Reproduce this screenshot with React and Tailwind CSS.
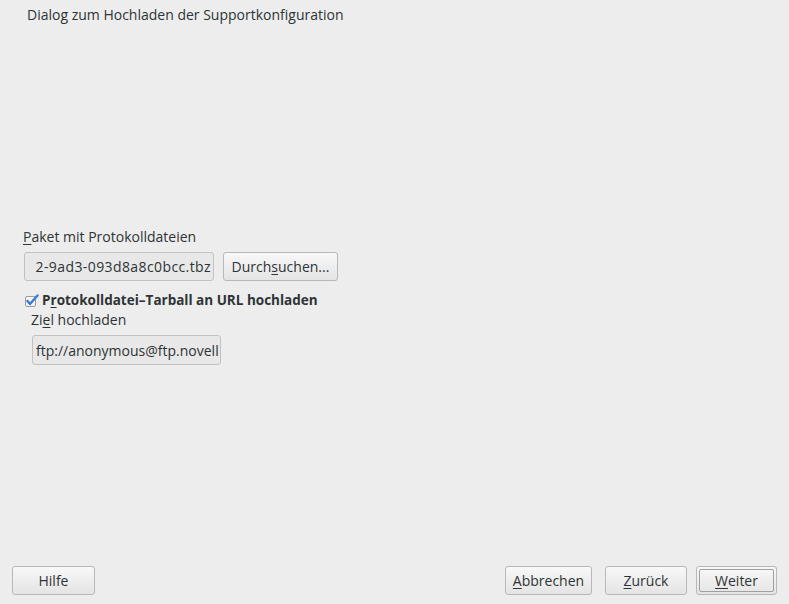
import React from 'react';

const font = { fontFamily: '"Open Sans", "Noto Sans", sans-serif' };

const Btn = ({ children, className = '', primary = false }) => (
  <button
    className={`h-[29px] rounded-[3px] border border-[#b8b8b8] bg-gradient-to-b from-[#f8f8f8] to-[#e4e4e4] text-[14px] text-[#2e3436] ${className}`}
  >
    {primary ? (
      <span className="flex h-full w-full items-center justify-center rounded-[2px] border border-[#a0a0a0]">
        {children}
      </span>
    ) : (
      children
    )}
  </button>
);

const U = ({ children }) => <span className="underline underline-offset-2">{children}</span>;

export default function App() {
  return (
    <div
      className="flex h-[604px] w-[789px] flex-col bg-[#ededed] text-[14px] text-[#2e3436]"
      style={font}
    >
      <div className="pl-[27px] pt-[5px] leading-[19px]">Dialog zum Hochladen der Supportkonfiguration</div>

      <div className="mt-[203px] flex flex-col pl-[23px]">
        <div className="leading-[19px]">
          <U>P</U>aket mit Protokolldateien
        </div>
        <div className="mt-[6px] flex items-center gap-[9px] pl-[1px]">
          <div className="flex h-[29px] w-[190px] items-center justify-end overflow-hidden whitespace-nowrap rounded-[3px] border border-[#c2c2c2] bg-[#e8e8e8] pr-[2px] tracking-[0.4px]">
            2-9ad3-093d8a8c0bcc.tbz
          </div>
          <Btn className="w-[115px]">
            Durch<U>s</U>uchen...
          </Btn>
        </div>
        <div className="mt-[10px] flex items-center gap-[3px] pl-[2px]">
          <svg width="14" height="14" viewBox="0 0 14 14">
            <rect x="0.5" y="2.5" width="10" height="10" rx="1.5" fill="#f4f4f4" stroke="#9a9a9a" />
            <path d="M2.5 7 L5 10 L12.5 1.5" fill="none" stroke="#3a7bd5" strokeWidth="2.4" strokeLinecap="round" strokeLinejoin="round" />
          </svg>
          <span className="font-bold leading-[19px] text-[13.5px]">
            P<U>r</U>otokolldatei–Tarball an URL hochladen
          </span>
        </div>
        <div className="pl-[8px] leading-[19px]">
          Zi<U>e</U>l hochladen
        </div>
        <div className="mt-[6px] pl-[9px]">
          <div className="flex h-[30px] w-[189px] items-center overflow-hidden whitespace-nowrap rounded-[3px] border border-[#c2c2c2] bg-[#e8e8e8] pl-[3px]">
            ftp://anonymous@ftp.novell
          </div>
        </div>
      </div>

      <div className="mt-auto mb-[9px] flex items-center pl-[12px] pr-[12px]">
        <Btn className="w-[83px]">Hilfe</Btn>
        <div className="ml-auto flex">
          <Btn className="w-[87px] mr-[13px]">
            <U>A</U>bbrechen
          </Btn>
          <Btn className="w-[82px] mr-[9px]">
            <U>Z</U>urück
          </Btn>
          <Btn className="w-[81px] p-[2px]" primary>
            <U>W</U>eiter
          </Btn>
        </div>
      </div>
    </div>
  );
}
